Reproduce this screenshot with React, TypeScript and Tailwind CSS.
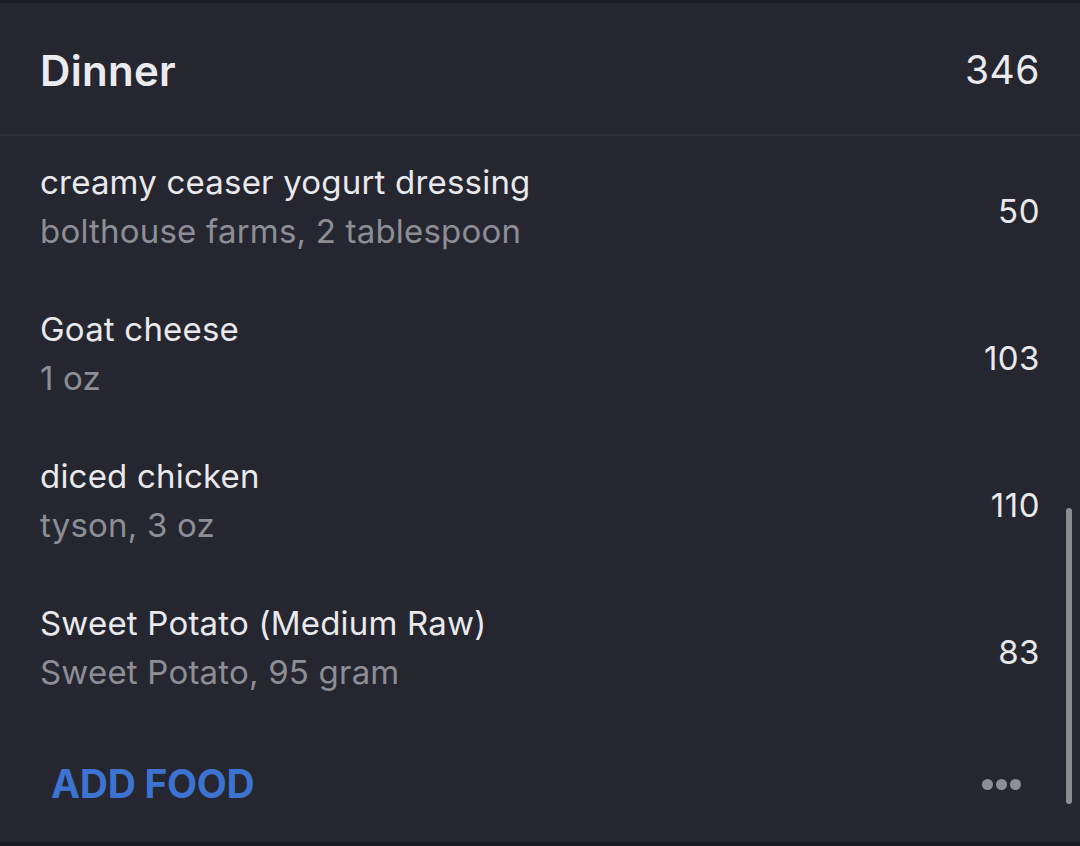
const foods = [
  { name: 'creamy ceaser yogurt dressing', detail: 'bolthouse farms, 2 tablespoon', cal: 50 },
  { name: 'Goat cheese', detail: '1 oz', cal: 103 },
  { name: 'diced chicken', detail: 'tyson, 3 oz', cal: 110 },
  { name: 'Sweet Potato (Medium Raw)', detail: 'Sweet Potato, 95 gram', cal: 83 },
]

export default function App() {
  return (
    <div
      className="w-[1080px] h-[846px] bg-[#1b1c23] pt-[3px] pb-[4px] overflow-hidden"
      style={{ fontFamily: 'Inter, "Noto Sans", sans-serif' }}
    >
      <div className="relative h-full bg-[#25262f] flex flex-col">
        <div className="h-[133px] flex items-center justify-between pl-[40px] pr-[40px] pt-[3px] border-b-2 border-[#30313a]">
          <span className="text-[42px] font-semibold text-[#ebebef] tracking-[0.3px]">Dinner</span>
          <span className="text-[39px] text-[#ebebef] tracking-[0.5px]">346</span>
        </div>

        {foods.map((f) => (
          <div key={f.name} className="h-[147px] flex items-center justify-between pl-[40px] pr-[40px]">
            <div className="flex flex-col -mt-[5px]">
              <span className="text-[33px] leading-[49px] text-[#e9e9ed] tracking-[0.2px]">{f.name}</span>
              <span className="text-[33px] leading-[49px] text-[#8d8e95] tracking-[0.2px]">{f.detail}</span>
            </div>
            <span className="text-[33px] text-[#e9e9ed] tracking-[0.5px] mt-[4px]">{f.cal}</span>
          </div>
        ))}

        <div className="flex-1 flex items-center justify-between pl-[51px] pr-[59px] pt-[3px]">
          <span className="text-[39px] font-bold text-[#3c73d0] tracking-[-0.3px]">ADD FOOD</span>
          <div className="flex gap-[3px]">
            <span className="w-[11px] h-[11px] rounded-full bg-[#8e8f95]" />
            <span className="w-[11px] h-[11px] rounded-full bg-[#8e8f95]" />
            <span className="w-[11px] h-[11px] rounded-full bg-[#8e8f95]" />
          </div>
        </div>

        <div className="absolute left-[1066px] top-[505px] w-[6px] h-[296px] rounded-full bg-[#8d8e93]" />
      </div>
    </div>
  )
}
